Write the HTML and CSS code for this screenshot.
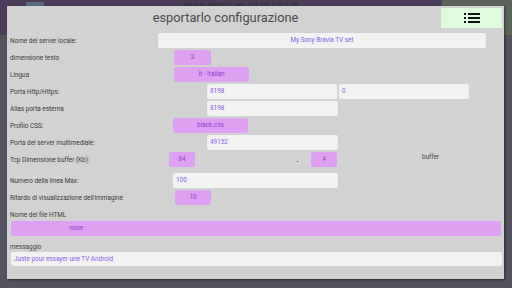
FILE: index.html
```html
<!DOCTYPE html>
<html lang="it">
<head>
<meta charset="utf-8">
<link rel="stylesheet" href="styles.css">
</head>
<body>
<div class="app">
  <div class="appbar">
    <span class="appbtn"></span>
    <span class="apptitle">My Sony Bravia TV set - 192.168.1.10:8198</span>
    <span class="appgreen"></span>
  </div>
</div>
<div class="dialog">
  <div class="head">
    <div class="title">esportarlo configurazione</div>
    <div class="menu">
      <svg width="16" height="10" viewBox="0 0 16 10">
        <rect x="0" y="0" width="2" height="2" fill="#111"/>
        <rect x="4" y="0" width="12" height="2" fill="#111"/>
        <rect x="0" y="4" width="2" height="2" fill="#111"/>
        <rect x="4" y="4" width="12" height="2" fill="#111"/>
        <rect x="0" y="8" width="2" height="2" fill="#111"/>
        <rect x="4" y="8" width="12" height="2" fill="#111"/>
      </svg>
    </div>
  </div>
  <div class="form">
    <div class="row">
      <span class="lbl">Nome del server locale:</span>
      <span class="box white center w328">My Sony Bravia TV set</span>
    </div>
    <div class="row">
      <span class="lbl">dimensione testo</span>
      <span class="box pink o16 w37">3</span>
    </div>
    <div class="row">
      <span class="lbl">Lingua</span>
      <span class="box pink o16 w75">it - Italian</span>
    </div>
    <div class="row">
      <span class="lbl">Porta Http/Https:</span>
      <span class="box white left o49 w130">8198</span>
      <span class="box white left o2 w130">0</span>
    </div>
    <div class="row">
      <span class="lbl">Alias porta esterna</span>
      <span class="box white left o49 w131">8198</span>
    </div>
    <div class="row">
      <span class="lbl">Profilo CSS:</span>
      <span class="box pink o15 w75">black.css</span>
    </div>
    <div class="row">
      <span class="lbl">Porta del server multimediale:</span>
      <span class="box white left o49 w131">49152</span>
    </div>
    <div class="row">
      <span class="lbl">Tcp Dimensione buffer (Kb):</span>
      <span class="box pink o11 w26">64</span>
      <span class="dot o102"></span>
      <span class="box pink o13 w26">4</span>
      <span class="buf">buffer</span>
    </div>
    <div class="row gap">
      <span class="lbl">Numero della linea Max:</span>
      <span class="box white left o15 w165">100</span>
    </div>
    <div class="row">
      <span class="lbl">Ritardo di visualizzazione dell'immagine</span>
      <span class="box pink o17 w36">10</span>
    </div>
    <div class="caption c1">Nome del file HTML</div>
    <div class="box pink wide none">none</div>
    <div class="caption c2">messaggio</div>
    <div class="box white left wide msg">Juste pour essayer une TV Android</div>
  </div>
</div>
</body>
</html>
```
FILE: styles.css
```css
* { box-sizing: border-box; }
html, body { margin: 0; padding: 0; }
body {
  width: 512px;
  height: 288px;
  background: #54525e;
  font-family: Roboto, "Liberation Sans", sans-serif;
  overflow: hidden;
  position: relative;
}
.app { height: 288px; }
.appbar {
  height: 35px;
  background: #4b3d59;
  display: flex;
  align-items: flex-start;
}
.appbtn {
  margin: 2px 0 0 26px;
  width: 18px;
  height: 6px;
  background: #5d6a86;
  border-radius: 2px;
}
.apptitle {
  margin: 0 0 0 140px;
  font-size: 6px;
  color: #2e2638;
  line-height: 8px;
}
.appgreen {
  margin-left: auto;
  width: 70px;
  height: 35px;
  background: #5b6458;
}
.dialog {
  position: absolute;
  left: 7px;
  top: 6px;
  width: 497px;
  height: 273px;
  background: #d2d2d2;
  box-shadow: 1px 1px 2px rgba(0,0,0,0.5);
  padding: 2px 2px 0 3px;
}
.head {
  display: flex;
  height: 20px;
  align-items: center;
}
.title {
  flex: 1;
  text-align: center;
  font-size: 12.8px;
  font-weight: 400;
  color: #4a4a4a;
  padding-left: 2px;
  padding-right: 2px;
  line-height: 20px;
}
.menu {
  width: 61px;
  height: 20px;
  background: #dcfcdc;
  display: flex;
  align-items: center;
  justify-content: center;
}
.menu svg { display: block; }
.form {
  padding-top: 5px;
  display: flex;
  flex-direction: column;
  align-items: flex-start;
}
.row {
  display: flex;
  align-items: center;
  height: 15px;
  margin-bottom: 2px;
}
.row.gap { margin-top: 4px; }
.lbl {
  flex: 0 0 148px;
  font-size: 6.4px;
  color: #3a3a3a;
  white-space: nowrap;
}
.box {
  height: 15px;
  border-radius: 2px;
  font-size: 6.4px;
  line-height: 15px;
  display: inline-block;
  white-space: nowrap;
}
.white {
  background: #f2f2f2;
  color: #8a5cf0;
}
.pink {
  background: #dea0f0;
  color: #8c3fcc;
  text-align: center;
}
.center { text-align: center; }
.left { text-align: left; padding-left: 3px; }
.w26 { width: 26px; }
.w36 { width: 36px; }
.w37 { width: 37px; }
.w75 { width: 75px; }
.w130 { width: 130px; }
.w131 { width: 131px; }
.w165 { width: 165px; }
.w328 { width: 328px; }
.o2 { margin-left: 2px; }
.o11 { margin-left: 11px; }
.o13 { margin-left: 13px; }
.o15 { margin-left: 15px; }
.o16 { margin-left: 16px; }
.o17 { margin-left: 17px; }
.o49 { margin-left: 49px; }
.o102 { margin-left: 102px; }
.dot {
  width: 1px;
  height: 1px;
  background: #555;
  margin-top: 3px;
}
.buf {
  margin-left: 85px;
  font-size: 6.4px;
  color: #444;
  align-self: flex-start;
  margin-top: 1px;
}
.caption {
  font-size: 6.4px;
  color: #3a3a3a;
}
.c1 { margin-top: 3px; height: 11px; line-height: 10px; }
.c2 { height: 16px; padding-top: 7px; line-height: 8px; }
.wide { display: block; }
.none {
  width: 490px;
  margin-left: 1px;
  text-align: left;
  padding-left: 58px;
}
.msg {
  width: 491px;
  margin-left: 1px;
  height: 14px;
  line-height: 14px;
}
```
